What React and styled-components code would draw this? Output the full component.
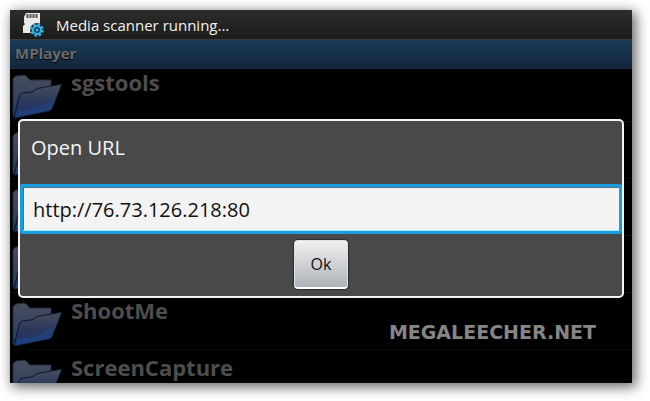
import React, { useState } from 'react';
import styled, { createGlobalStyle } from 'styled-components';

const folders = [
    { id: 1, name: 'sgstools' },
    { id: 2, name: '' },
    { id: 3, name: '' },
    { id: 4, name: '' },
    { id: 5, name: 'ShootMe' },
    { id: 6, name: 'ScreenCapture' },
];

function ScannerIcon() {
    return (
        <svg width="22" height="25" viewBox="0 0 22 25" aria-hidden="true">
            <path d="M4 1h14v20H1v-7l2-2-1-1V5z" fill="#e9e9e9" />
            <path d="M5.500 2v4M8.500 2v4M11.500 2v4M14.500 2v4" stroke="#555" strokeWidth="2" />
            <circle cx="15" cy="18" r="7" fill="#12303f" />
            <circle cx="15" cy="18" r="5.500" fill="none" stroke="#35b4e6" strokeWidth="2.500" strokeDasharray="2.300 2" />
            <circle cx="15" cy="18" r="4" fill="#123a50" stroke="#35b4e6" strokeWidth="2" />
            <circle cx="15" cy="18" r="1.500" fill="#35b4e6" />
        </svg>
    );
}

function FolderIcon() {
    return (
        <svg width="51" height="45" viewBox="0 0 51 45" aria-hidden="true">
            <defs>
                <linearGradient id="back" x1="0" y1="0" x2="0" y2="1">
                    <stop offset="0" stopColor="#474d5a" />
                    <stop offset="1" stopColor="#24386a" />
                </linearGradient>
                <linearGradient id="front" x1="0" y1="0" x2="0" y2="1">
                    <stop offset="0" stopColor="#474d5b" />
                    <stop offset="0.550" stopColor="#29375a" />
                    <stop offset="1" stopColor="#1c3874" />
                </linearGradient>
            </defs>
            <path d="M1 42V5q1-2 3-3l8-1q2 0 4 3l2 2h21v26L3 44z" fill="url(#back)" stroke="#20283a" />
            <path d="M2 44L7 23q1-4 4-4l8-1q2 0 4-2t5-2l22-4-9 23q-1 3-3 4L4 44z" fill="url(#front)" stroke="#0d1424" />
            <path d="M6 37q22-1 38-15l-4 12q-1 2-4 3L4 43z" fill="#234a96" opacity="0.400" />
        </svg>
    );
}

function App() {
    const [url, setUrl] = useState('http://76.73.126.218:80');

    return (
        <>
            <GlobalStyle />
            <Screen>
                <StatusBar>
                    <ScannerIcon />
                    <span>Media scanner running...</span>
                </StatusBar>
                <Player>
                    <TitleBar>MPlayer</TitleBar>
                    <FolderList>
                        {folders.map((folder) => (
                            <FolderRow key={folder.id}>
                                <FolderIcon />
                                <FolderName>{folder.name}</FolderName>
                            </FolderRow>
                        ))}
                    </FolderList>
                    <Watermark>MEGALEECHER.NET</Watermark>
                    <Overlay>
                        <Dialog role="dialog" aria-labelledby="url-label" onSubmit={(e) => e.preventDefault()}>
                            <DialogTitle id="url-label" htmlFor="url">Open URL</DialogTitle>
                            <UrlInput id="url" value={url} onChange={(e) => setUrl(e.target.value)} />
                            <OkButton type="submit">Ok</OkButton>
                        </Dialog>
                    </Overlay>
                </Player>
            </Screen>
        </>
    );
}

const GlobalStyle = createGlobalStyle`
  * {
    box-sizing: border-box;
  }

  html, body, #root {
    height: 100%;
  }

  body {
    margin: 0;
    background: white;
    font-family: "Open Sans", "Noto Sans", sans-serif;
  }

  #root {
    display: flex;
    padding: 10px 18px 18px 10px;
  }
`;

const Screen = styled.main`
  flex: 1;
  min-width: 0;
  display: flex;
  flex-direction: column;
  background: black;
  box-shadow: 3px 3px 12px 1px rgba(0, 0, 0, 0.6);
`;

const StatusBar = styled.header`
  display: flex;
  align-items: center;
  gap: 12px;
  height: 30px;
  padding: 0 12px;
  background: linear-gradient(#2c2d2c, #1b1b19);
  border-bottom: 1px solid #353a3d;
  color: #f2f2f2;
  font-size: 15px;
  line-height: 28px;
`;

const Player = styled.section`
  position: relative;
  flex: 1;
  min-height: 0;
  display: flex;
  flex-direction: column;
`;

const TitleBar = styled.h1`
  flex: none;
  margin: 0;
  height: 29px;
  padding: 0 5px;
  background: linear-gradient(#1b3b54, #12263c);
  border-bottom: 1px solid #1c2f40;
  color: #6b6b6b;
  font-size: 15px;
  font-weight: 700;
  line-height: 27px;
  text-shadow: 0 1px 1px black;
`;

const FolderList = styled.ul`
  flex: 1;
  min-height: 0;
  display: flex;
  flex-direction: column;
  justify-content: flex-end;
  margin: 0 0 -24px;
  padding: 0;
  list-style: none;
  clip-path: inset(0 0 24px);
`;

const FolderRow = styled.li`
  flex: none;
  display: flex;
  align-items: flex-end;
  gap: 8px;
  height: 57px;
  padding: 0 2px 2px;
  border-bottom: 1px solid #0c0c0c;
`;

const FolderName = styled.span`
  align-self: flex-start;
  padding-top: 2px;
  color: #4d4d4d;
  font-size: 22px;
  font-weight: 700;
  line-height: 30px;
`;

const Watermark = styled.div`
  position: absolute;
  right: 36px;
  bottom: 40px;
  color: #858585;
  font-family: "DejaVu Sans", sans-serif;
  font-size: 19px;
  font-weight: 700;
  line-height: 22px;
`;

const Overlay = styled.div`
  position: absolute;
  inset: 0 8px 6px;
  display: flex;
  align-items: center;
  justify-content: center;
`;

const Dialog = styled.form`
  width: 100%;
  display: flex;
  flex-direction: column;
  background: #494949;
  border: 2px solid #f4f4f4;
  border-radius: 5px;
  padding-bottom: 7px;
`;

const DialogTitle = styled.label`
  padding: 9px 11px 18px;
  color: #f4f4f4;
  font-size: 20px;
  line-height: 36px;
`;

const UrlInput = styled.input`
  width: 100%;
  height: 50px;
  padding: 0 10px;
  background: #f3f3f3;
  border: 3px solid #1a9ce0;
  border-radius: 2px;
  box-shadow: inset 0 -1px #a5e6fa, inset 1px 1px #56717f;
  outline: none;
  color: #111;
  font-family: inherit;
  font-size: 20px;
`;

const OkButton = styled.button`
  align-self: center;
  width: 54px;
  height: 49px;
  margin-top: 6px;
  padding: 0;
  background: linear-gradient(#f0f0f1, #cfd2d5 50%, #adb3b8);
  border: 1px solid #dfe2e4;
  border-bottom: 2px solid white;
  border-radius: 4px;
  box-shadow: 0 0 1px 1px #2c2c2c;
  color: #111;
  font-family: inherit;
  font-size: 16px;
`;

export default App;
